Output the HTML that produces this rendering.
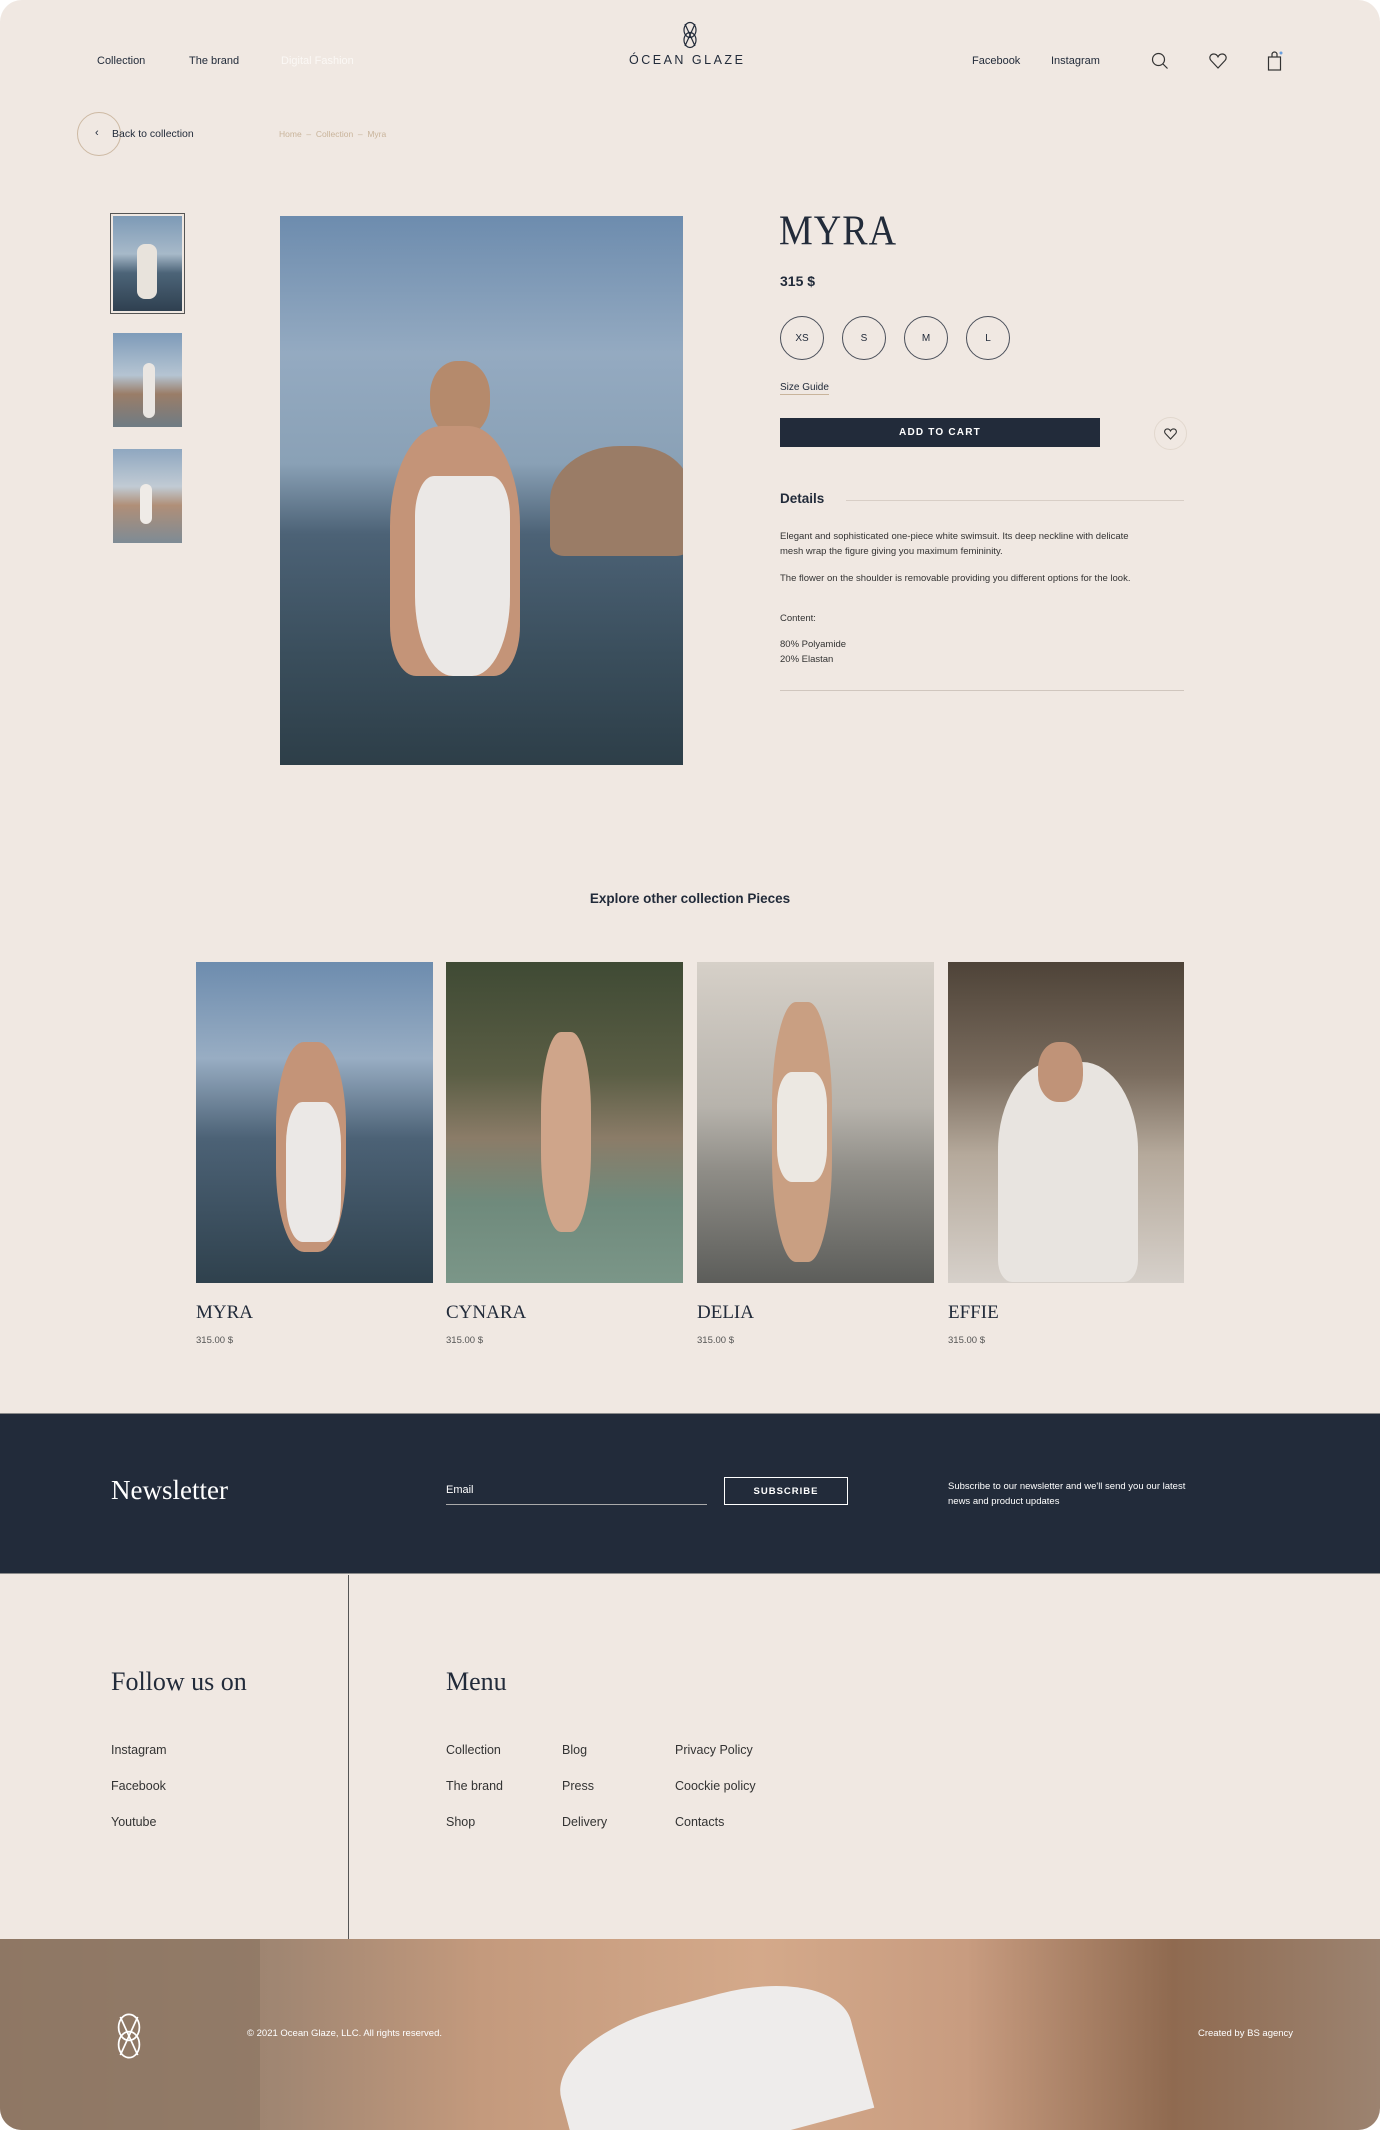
<!DOCTYPE html>
<html><head><meta charset="utf-8"><style>
*{margin:0;padding:0;box-sizing:border-box}
body{width:1380px;height:2130px;background:#fff;font-family:"Liberation Sans",sans-serif;color:#222b3a;overflow:hidden}
.page{position:relative;width:1380px;height:2130px;background:#f0e8e2;border-radius:22px;overflow:hidden}
.a{position:absolute;white-space:nowrap}
.s{font-size:11px}
.serif{font-family:"Liberation Serif",serif}
.ph{position:absolute;overflow:hidden}
.circ{position:absolute;width:44px;height:44px;border:1.3px solid #4a4f5a;border-radius:50%;font-size:10px;display:flex;align-items:center;justify-content:center}
.fl{position:absolute;font-size:12.5px;color:#333}
</style></head><body><div class="page">

<!-- header -->
<div class="a s" style="left:97px;top:55px">Collection</div>
<div class="a s" style="left:189px;top:55px">The brand</div>
<div class="a s" style="left:281px;top:55px;color:#fbf8f5">Digital Fashion</div>
<svg class="a" style="left:680px;top:20px" width="20" height="30" viewBox="0 0 20 30"><g fill="none" stroke="#222b3a" stroke-width="1.2"><ellipse cx="10" cy="10" rx="6" ry="7.5"/><ellipse cx="10" cy="20" rx="6" ry="7.5"/><path d="M5 4 L15 26 M15 4 L5 26"/></g></svg>
<div class="a" style="left:629px;top:53px;font-size:12.5px;letter-spacing:2.5px">ÓCEAN GLAZE</div>
<div class="a s" style="left:972px;top:55px">Facebook</div>
<div class="a s" style="left:1051px;top:55px">Instagram</div>
<svg class="a" style="left:1151px;top:52px" width="18" height="18" viewBox="0 0 18 18"><g fill="none" stroke="#333" stroke-width="1.2"><circle cx="7.5" cy="7.5" r="6"/><path d="M12 12l4.5 4.5"/></g></svg>
<svg class="a" style="left:1209px;top:53px" width="18" height="16" viewBox="0 0 18 16"><path d="M9 15 L2 7.5 C-0.5 4.5 1.5 1 4.8 1 C7 1 8.3 2.5 9 3.8 C9.7 2.5 11 1 13.2 1 C16.5 1 18.5 4.5 16 7.5Z" fill="none" stroke="#333" stroke-width="1.2"/></svg>
<svg class="a" style="left:1267px;top:51px" width="16" height="20" viewBox="0 0 16 20"><g fill="none" stroke="#333" stroke-width="1.2"><rect x="1.5" y="6" width="12" height="13"/><path d="M5 6V3.5a2.5 2.5 0 0 1 5 0V6"/></g><circle cx="14" cy="2" r="1.5" fill="#6aa0e0"/></svg>

<div class="a" style="left:77px;top:112px;width:44px;height:44px;border:1px solid #cdb9a3;border-radius:50%"></div>
<div class="a" style="left:95px;top:127px;font-size:11px">‹</div>
<div class="a s" style="left:112px;top:128px;font-size:10.5px">Back to collection</div>
<div class="a" style="left:279px;top:129px;font-size:8.5px;color:#c9b49b">Home &nbsp;–&nbsp; Collection &nbsp;–&nbsp; Myra</div>

<!-- thumbs -->
<div class="a" style="left:110px;top:213px;width:75px;height:101px;border:1.3px solid #555"></div>
<div class="ph" style="left:113px;top:216px;width:69px;height:95px;background:linear-gradient(#7d9ab6 0%,#a7b9c9 40%,#4c6478 60%,#2f4050 100%)"><div style="position:absolute;left:24px;top:28px;width:20px;height:55px;background:#e8e3dc;border-radius:8px"></div></div>
<div class="ph" style="left:113px;top:333px;width:69px;height:94px;background:linear-gradient(#7e9bb9 0%,#b5c4d2 45%,#9a7d68 65%,#6f7c84 100%)"><div style="position:absolute;left:30px;top:30px;width:12px;height:55px;background:#eae6e2;border-radius:6px"></div></div>
<div class="ph" style="left:113px;top:449px;width:69px;height:94px;background:linear-gradient(#8fa7c0 0%,#c1cbd4 40%,#b08f78 60%,#7e8b95 100%)"><div style="position:absolute;left:27px;top:35px;width:12px;height:40px;background:#efebe7;border-radius:6px"></div></div>

<!-- main image -->
<div class="ph" style="left:280px;top:216px;width:403px;height:549px;background:linear-gradient(180deg,#6d8cae 0%,#94aac1 25%,#8aa1b6 45%,#4c6276 58%,#3a4e5c 80%,#2d3e48 100%)">
 <div style="position:absolute;left:270px;top:230px;width:140px;height:110px;background:#9a7c66;border-radius:50% 40% 10% 10%"></div>
 <div style="position:absolute;left:150px;top:145px;width:60px;height:75px;background:#b58a6c;border-radius:45%"></div>
 <div style="position:absolute;left:110px;top:210px;width:130px;height:250px;background:#c49478;border-radius:40% 40% 20% 20%"></div>
 <div style="position:absolute;left:135px;top:260px;width:95px;height:200px;background:#ebe8e6;border-radius:20% 20% 40% 40%"></div>
</div>

<!-- product info -->
<div class="a serif" style="left:779px;top:207px;font-size:38px;letter-spacing:1px;transform:scaleY(1.1);transform-origin:left top">MYRA</div>
<div class="a" style="left:780px;top:273px;font-size:14px;font-weight:bold">315 $</div>
<div class="circ" style="left:780px;top:316px">XS</div>
<div class="circ" style="left:842px;top:316px">S</div>
<div class="circ" style="left:904px;top:316px">M</div>
<div class="circ" style="left:966px;top:316px">L</div>
<div class="a" style="left:780px;top:382px;font-size:10px;border-bottom:1px solid #c9b49b;padding-bottom:1px">Size Guide</div>
<div class="a" style="left:780px;top:418px;width:320px;height:29px;background:#222b3a;color:#fff;font-size:10px;letter-spacing:1.2px;font-weight:bold;display:flex;align-items:center;justify-content:center">ADD TO CART</div>
<div class="a" style="left:1154px;top:417px;width:33px;height:33px;border:1px solid #e2d8ce;border-radius:50%"></div>
<svg class="a" style="left:1164px;top:428px" width="13" height="12" viewBox="0 0 18 16"><path d="M9 15 L2 7.5 C-0.5 4.5 1.5 1 4.8 1 C7 1 8.3 2.5 9 3.8 C9.7 2.5 11 1 13.2 1 C16.5 1 18.5 4.5 16 7.5Z" fill="none" stroke="#333" stroke-width="1.5"/></svg>
<div class="a" style="left:780px;top:491px;font-size:13.5px;font-weight:bold">Details</div>
<div class="a" style="left:846px;top:500px;width:338px;height:1px;background:#d8cec6"></div>
<div class="a" style="left:780px;top:529px;font-size:9.5px;line-height:15px;color:#333">Elegant and sophisticated one-piece white swimsuit. Its deep neckline with delicate<br>mesh wrap the figure giving you maximum femininity.</div>
<div class="a" style="left:780px;top:573px;font-size:9.5px;color:#333">The flower on the shoulder is removable providing you different options for the look.</div>
<div class="a" style="left:780px;top:613px;font-size:9.5px;color:#333">Content:</div>
<div class="a" style="left:780px;top:637px;font-size:9.5px;line-height:15px;color:#333">80% Polyamide<br>20% Elastan</div>
<div class="a" style="left:780px;top:690px;width:404px;height:1px;background:#d0c6be"></div>

<!-- explore -->
<div class="a" style="left:0;width:1380px;text-align:center;top:891px;font-size:13.5px;font-weight:bold">Explore other collection Pieces</div>
<div class="ph" style="left:196px;top:962px;width:237px;height:321px;background:linear-gradient(#6d8cae 0%,#98adc3 30%,#4c6276 55%,#2f414d 100%)"><div style="position:absolute;left:80px;top:80px;width:70px;height:210px;background:#c49478;border-radius:40%"></div><div style="position:absolute;left:90px;top:140px;width:55px;height:140px;background:#ebe8e6;border-radius:30%"></div></div>
<div class="ph" style="left:446px;top:962px;width:237px;height:321px;background:linear-gradient(#3f4a34 0%,#5b5e45 35%,#8b7c68 55%,#6f8a7c 75%,#7b9688 100%)"><div style="position:absolute;left:95px;top:70px;width:50px;height:200px;background:#cfa58a;border-radius:40%"></div></div>
<div class="ph" style="left:697px;top:962px;width:237px;height:321px;background:linear-gradient(#d6d0c8 0%,#b7b3ac 45%,#8f8d87 65%,#5c5d5a 100%)"><div style="position:absolute;left:75px;top:40px;width:60px;height:260px;background:#c99f82;border-radius:40%"></div><div style="position:absolute;left:80px;top:110px;width:50px;height:110px;background:#ece8e2;border-radius:30%"></div></div>
<div class="ph" style="left:948px;top:962px;width:236px;height:321px;background:linear-gradient(#4e4338 0%,#7a6c5e 35%,#b5a99b 60%,#d6d0ca 100%)"><div style="position:absolute;left:50px;top:100px;width:140px;height:220px;background:#e8e4e0;border-radius:40% 40% 10% 10%"></div><div style="position:absolute;left:90px;top:80px;width:45px;height:60px;background:#c09378;border-radius:45%"></div></div>
<div class="a serif" style="left:196px;top:1302px;font-size:19px">MYRA</div>
<div class="a serif" style="left:446px;top:1302px;font-size:19px">CYNARA</div>
<div class="a serif" style="left:697px;top:1302px;font-size:19px">DELIA</div>
<div class="a serif" style="left:948px;top:1302px;font-size:19px">EFFIE</div>
<div class="a" style="left:196px;top:1335px;font-size:9.5px;color:#555">315.00 $</div>
<div class="a" style="left:446px;top:1335px;font-size:9.5px;color:#555">315.00 $</div>
<div class="a" style="left:697px;top:1335px;font-size:9.5px;color:#555">315.00 $</div>
<div class="a" style="left:948px;top:1335px;font-size:9.5px;color:#555">315.00 $</div>

<!-- newsletter -->
<div class="a" style="left:0;top:1413px;width:1380px;height:161px;background:#222b3a;border-top:1px solid #8a8a8a;border-bottom:1px solid #8a8a8a"></div>
<div class="a serif" style="left:111px;top:1475px;font-size:27px;color:#fff">Newsletter</div>
<div class="a" style="left:446px;top:1484px;font-size:11px;color:#fff">Email</div>
<div class="a" style="left:446px;top:1504px;width:261px;height:1px;background:#aaa"></div>
<div class="a" style="left:724px;top:1477px;width:124px;height:28px;border:1.5px solid #fff;color:#fff;font-size:9.5px;letter-spacing:1px;font-weight:bold;display:flex;align-items:center;justify-content:center">SUBSCRIBE</div>
<div class="a" style="left:948px;top:1479px;font-size:9.5px;line-height:15px;color:#fff">Subscribe to our newsletter and we'll send you our latest<br>news and product updates</div>

<!-- footer -->
<div class="a" style="left:348px;top:1575px;width:1px;height:365px;background:#555"></div>
<div class="a serif" style="left:111px;top:1667px;font-size:26px">Follow us on</div>
<div class="a serif" style="left:446px;top:1667px;font-size:26px">Menu</div>
<div class="fl" style="left:111px;top:1743px">Instagram</div>
<div class="fl" style="left:111px;top:1779px">Facebook</div>
<div class="fl" style="left:111px;top:1815px">Youtube</div>
<div class="fl" style="left:446px;top:1743px">Collection</div>
<div class="fl" style="left:446px;top:1779px">The brand</div>
<div class="fl" style="left:446px;top:1815px">Shop</div>
<div class="fl" style="left:562px;top:1743px">Blog</div>
<div class="fl" style="left:562px;top:1779px">Press</div>
<div class="fl" style="left:562px;top:1815px">Delivery</div>
<div class="fl" style="left:675px;top:1743px">Privacy Policy</div>
<div class="fl" style="left:675px;top:1779px">Coockie policy</div>
<div class="fl" style="left:675px;top:1815px">Contacts</div>

<!-- bottom photo -->
<div class="ph" style="left:0;top:1939px;width:1380px;height:191px;background:linear-gradient(90deg,#8e7560 0%,#a08672 20%,#c49a7d 35%,#d4a98a 55%,#c89c80 70%,#8f6a50 85%,#9c8370 100%)">
 <div style="position:absolute;left:560px;top:60px;width:300px;height:150px;background:#eeeceb;border-radius:40% 40% 0 0;transform:rotate(-15deg)"></div>
 <div style="position:absolute;left:0;top:0;width:260px;height:191px;background:#8f7865;opacity:.8"></div>
</div>
<svg class="a" style="left:111px;top:2010px" width="36" height="52" viewBox="0 0 20 30"><g fill="none" stroke="#fff" stroke-width="1"><ellipse cx="10" cy="10" rx="6" ry="7.5"/><ellipse cx="10" cy="20" rx="6" ry="7.5"/><path d="M5 4 L15 26 M15 4 L5 26"/></g></svg>
<div class="a" style="left:247px;top:2028px;font-size:9.5px;color:#fff">© 2021 Ocean Glaze, LLC. All rights reserved.</div>
<div class="a" style="left:1198px;top:2028px;font-size:9.5px;color:#fff">Created by BS agency</div>
</div></body></html>
